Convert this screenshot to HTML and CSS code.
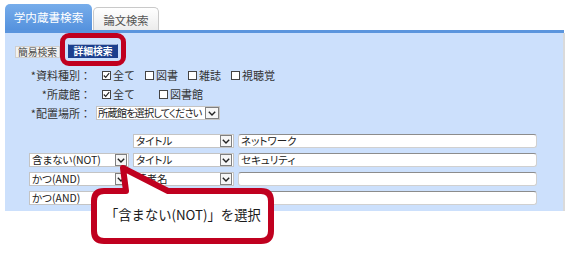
FILE: index.html
```html
<!DOCTYPE html>
<html lang="ja">
<head>
<meta charset="utf-8">
<title>検索</title>
<link rel="stylesheet" href="styles.css">
</head>
<body>
<div class="page">
  <div class="tabs">
    <div class="tab active">学内蔵書検索</div>
    <div class="tab">論文検索</div>
  </div>
  <div class="tabline"></div>
  <div class="panel">
    <div class="modes">
      <span class="mode">簡易検索</span>
      <span class="mode on">詳細検索</span>
    </div>
    <div class="form">
      <div class="lbl">*資料種別：</div>
      <div class="opts">
        <span class="opt"><span class="cb checked"><svg viewBox="0 0 9 9" width="7" height="7"><polyline points="1,4.5 3.5,7 8,1.5" fill="none" stroke="#222" stroke-width="1.4"/></svg></span>全て</span>
        <span class="opt"><span class="cb"></span>図書</span>
        <span class="opt"><span class="cb"></span>雑誌</span>
        <span class="opt"><span class="cb"></span>視聴覚</span>
      </div>
      <div class="lbl">*所蔵館：</div>
      <div class="opts">
        <span class="opt"><span class="cb checked"><svg viewBox="0 0 9 9" width="7" height="7"><polyline points="1,4.5 3.5,7 8,1.5" fill="none" stroke="#222" stroke-width="1.4"/></svg></span>全て</span>
        <span class="opt wide"><span class="cb"></span>図書館</span>
      </div>
      <div class="lbl">*配置場所：</div>
      <div class="opts">
        <div class="sel place"><span class="txt">所蔵館を選択してください</span><span class="arr"><svg viewBox="0 0 8 5" width="8" height="5"><polyline points="0.8,0.8 4,4 7.2,0.8" fill="none" stroke="#222" stroke-width="1.4"/></svg></span></div>
      </div>
    </div>
    <div class="search">
      <div class="blank"></div>
      <div class="sel"><span class="txt">タイトル</span><span class="arr"><svg viewBox="0 0 8 5" width="8" height="5"><polyline points="0.8,0.8 4,4 7.2,0.8" fill="none" stroke="#222" stroke-width="1.4"/></svg></span></div>
      <div class="inp">ネットワーク</div>

      <div class="sel"><span class="txt">含まない(NOT)</span><span class="arr"><svg viewBox="0 0 8 5" width="8" height="5"><polyline points="0.8,0.8 4,4 7.2,0.8" fill="none" stroke="#222" stroke-width="1.4"/></svg></span></div>
      <div class="sel"><span class="txt">タイトル</span><span class="arr"><svg viewBox="0 0 8 5" width="8" height="5"><polyline points="0.8,0.8 4,4 7.2,0.8" fill="none" stroke="#222" stroke-width="1.4"/></svg></span></div>
      <div class="inp">セキュリティ</div>

      <div class="sel"><span class="txt">かつ(AND)</span><span class="arr"><svg viewBox="0 0 8 5" width="8" height="5"><polyline points="0.8,0.8 4,4 7.2,0.8" fill="none" stroke="#222" stroke-width="1.4"/></svg></span></div>
      <div class="sel"><span class="txt">著者名</span><span class="arr"><svg viewBox="0 0 8 5" width="8" height="5"><polyline points="0.8,0.8 4,4 7.2,0.8" fill="none" stroke="#222" stroke-width="1.4"/></svg></span></div>
      <div class="inp"></div>

      <div class="sel"><span class="txt">かつ(AND)</span><span class="arr"><svg viewBox="0 0 8 5" width="8" height="5"><polyline points="0.8,0.8 4,4 7.2,0.8" fill="none" stroke="#222" stroke-width="1.4"/></svg></span></div>
      <div class="sel"><span class="txt">出版者</span><span class="arr"><svg viewBox="0 0 8 5" width="8" height="5"><polyline points="0.8,0.8 4,4 7.2,0.8" fill="none" stroke="#222" stroke-width="1.4"/></svg></span></div>
      <div class="inp"></div>
    </div>
  </div>
</div>

<div class="highlight"></div>

<div class="callout">
  <svg class="callout-shape" width="200" height="100" viewBox="85 160 200 100">
    <path d="M104 191 L126 191 L123 168 L168 191 L261 191 Q271 191 271 201 L271 231 Q271 241 261 241 L104 241 Q94 241 94 231 L94 201 Q94 191 104 191 Z" fill="#fff" stroke="#c0001f" stroke-width="6" stroke-linejoin="round"/>
  </svg>
  <div class="callout-text">「含まない(NOT)」を選択</div>
</div>
</body>
</html>
```

FILE: styles.css
```css
* { box-sizing: border-box; }

html, body {
  margin: 0;
  background: #fff;
}

body {
  width: 571px;
  height: 253px;
  position: relative;
  overflow: hidden;
  font-family: "Noto Sans CJK JP", "Noto Sans", sans-serif;
  font-size: 11px;
  color: #333;
}

.page {
  padding: 4px 0 0 5px;
}

.tabs {
  display: flex;
  align-items: flex-end;
  gap: 1px;
  height: 26px;
}

.tab {
  height: 23px;
  width: 66px;
  border: 1px solid #c9c9c9;
  border-bottom: none;
  border-radius: 5px 5px 0 0;
  background: linear-gradient(#ffffff, #ececec);
  color: #555;
  font-size: 11.3px;
  display: flex;
  align-items: center;
  justify-content: center;
  padding-top: 1px;
}

.tab.active {
  height: 26px;
  width: 87px;
  border: none;
  background: linear-gradient(#77adeb, #5592de);
  color: #fff;
  font-size: 11.6px;
  padding-top: 0;
}

.tabline {
  width: 559px;
  height: 3px;
  background: #5b95dd;
}

.panel {
  width: 558px;
  height: 178px;
  background: #cce0fc;
  box-shadow: 2px 0 0 #dadada;
  padding-top: 11px;
}

.modes {
  display: flex;
  align-items: flex-end;
  gap: 8px;
  padding-left: 10px;
  height: 14px;
}

.mode {
  height: 12px;
  width: 45px;
  background: #f1f1f1;
  border: 1px solid #cfcfcf;
  color: #4a4a4a;
  font-size: 9.8px;
  line-height: 10px;
  text-align: center;
}

.mode.on {
  height: 14px;
  width: 50px;
  background: #1c3f8e;
  border: 1px solid #1c3f8e;
  border-top: 1px solid #9fb0d4;
  color: #fff;
  font-weight: bold;
  line-height: 12px;
}

.form {
  display: grid;
  grid-template-columns: 86px auto;
  grid-auto-rows: 18px;
  row-gap: 1px;
  margin-top: 8px;
  align-items: center;
}

.lbl {
  text-align: right;
  white-space: nowrap;
  color: #333;
}

.opts {
  display: flex;
  align-items: center;
  padding-left: 8px;
}

.opt {
  display: flex;
  align-items: center;
  margin-left: 3px;
  margin-right: 7px;
}

.opt.wide {
  margin-left: 17px;
}

.cb {
  width: 9px;
  height: 9px;
  border: 1px solid #444;
  background: #fff;
  margin-right: 2px;
  display: flex;
  align-items: center;
  justify-content: center;
}

.sel {
  display: flex;
  align-items: center;
  height: 14px;
  background: #fff;
  border: 1px solid #c4c4c4;
  font-size: 10.5px;
  font-feature-settings: "palt";
  color: #222;
}

.sel .txt {
  flex: 1;
  padding-left: 2px;
  white-space: nowrap;
  line-height: 12px;
}

.sel .arr {
  width: 12px;
  height: 12px;
  flex: none;
  border: 1px solid #808080;
  background: #f6f6f6;
  display: flex;
  align-items: center;
  justify-content: center;
  margin-right: 1px;
}

.sel.place {
  width: 124px;
  margin-left: -3px;
}

.sel.place .txt {
  font-size: 10.2px;
  letter-spacing: -0.85px;
  padding-left: 1px;
}

.sel.place .arr {
  width: 14px;
  margin-right: 0;
}

.search {
  display: grid;
  grid-template-columns: 100px 101px 299px;
  grid-auto-rows: 14px;
  column-gap: 4px;
  row-gap: 5px;
  margin-top: 12px;
  padding-left: 24px;
}

.inp {
  height: 14px;
  background: #fff;
  border: 1px solid #d0d0d0;
  border-top: 1px solid #8c8c8c;
  border-radius: 3px;
  padding-left: 2px;
  font-size: 10.5px;
  line-height: 12px;
  font-feature-settings: "palt";
  color: #222;
  white-space: nowrap;
}

.highlight {
  position: absolute;
  left: 60px;
  top: 33px;
  width: 66px;
  height: 33px;
  border: 5px solid #c0001f;
  border-radius: 9px;
}

.callout {
  position: absolute;
  left: 85px;
  top: 160px;
  width: 200px;
  height: 100px;
}

.callout-shape {
  position: absolute;
  left: 0;
  top: 0;
}

.callout-text {
  position: absolute;
  left: 20px;
  top: 46px;
  font-size: 13.3px;
  line-height: 18px;
  color: #1a1a1a;
  white-space: nowrap;
}
```
